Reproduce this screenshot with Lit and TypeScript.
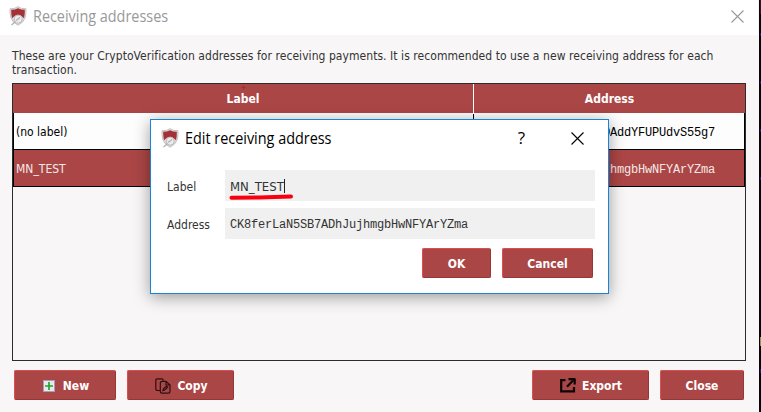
import { LitElement, html, css, svg } from "lit";
import { customElement } from "lit/decorators.js";

const shield = html`<svg class="shield" viewBox="0 0 18 20" width="18" height="20">
  <path d="M9 .7 Q12 3 17 2.8 Q17.2 8 16 12 Q14.5 16.5 9 19.2 Q3.5 16.5 2 12 Q.8 8 1 2.8 Q6 3 9 .7Z" fill="#dedede" stroke="#c2c2c2" stroke-width="1"/>
  <path d="M9 2.3 Q12 3.8 15.8 3.8 Q16 8 15 12.300 L13 10.500 Q9 7 5 10.500 L3 12.300 Q2 8 2.200 3.800 Q6 3.800 9 2.300Z" fill="#a53036"/>
  <circle cx="9.2" cy="13.2" r="4" fill="#ececec" stroke="#bbb"/>
  <path d="M2.5 19 L6.5 15.500 M7 14.500 L11 11.500" stroke="#b0b0b0" stroke-width="1.2" fill="none"/>
</svg>`;

const cross = svg`<path d="M.5 .5 L12.5 12.5 M12.5 .5 L.5 12.5" fill="none" stroke="currentColor" stroke-width="1.1"/>`;

@customElement("app-root")
export class AppRoot extends LitElement {
  static styles = css`
    :host {
      display: block;
      position: relative;
      width: 761px;
      height: 412px;
      overflow: hidden;
      background: #f8f6f7;
      font: 12px/14px "DejaVu Sans Condensed", "DejaVu Sans", sans-serif;
      font-stretch: condensed;
      color: #333;
    }
    * { box-sizing: border-box; }
    svg { display: block; flex: none; }
    .edge { position: absolute; right: 0; top: 0; }
    .titlebar {
      display: flex; align-items: center; height: 35px; padding: 0 17px 3px 9px;
      margin-right: 3px; background: #fff; color: #999;
    }
    .title { font: 16px/20px "Open Sans", "Noto Sans", sans-serif; white-space: nowrap; margin-left: 6px; flex: 1; }
    .title span { display: inline-block; transform: scaleX(.9); transform-origin: 0 50%; }
    .close { margin-right: -3px; }
    .intro { margin: 14px 0 0 12px; height: 34px; white-space: nowrap; letter-spacing: .057px; }
    .l1, .l2 { display: block; width: max-content; }
    .table {
      margin: 0 0 0 12px; width: 734px; height: 278px; border: 1px solid #2d2b2c;
    }
    .row { display: grid; grid-template-columns: 461px 271px; }
    .head { position: relative; height: 29px; background: #ab4646; color: #fff; font-weight: bold; text-align: center; line-height: 30px; }
    .head div:first-child { border-right: 1px solid #fff; }
    .speck { position: absolute; left: 228px; top: 1px; }
    .item { height: 37px; line-height: 38px; border: 1px solid #000; border-top: 0; background: #fdfdfd; color: #000; grid-template-columns: 460px 270px; }
    .item div { height: 36px; }
    .item div:first-child { border-right: 1px solid #000; padding-left: 2px; }
    .item div:last-child { text-align: right; padding-right: 29px; line-height: 40px; }
    .sel { background: #ab4646; color: #f6e8e8; }
    .mono { font-family: "Liberation Mono", monospace; font-size: 12px; letter-spacing: -.2px; }
    .bar { display: flex; margin: 9px 0 0 14px; width: 730px; }
    .gap { flex: 1; }
    .btn {
      display: flex; align-items: center; justify-content: center; height: 30px;
      background: #ab4646; border: 1px solid; border-color: #dc4f4f #963737 #963737 #dc4f4f; border-radius: 2px;
      color: #fff; font-weight: bold; gap: 8px; padding-top: 1px;
    }
    .new { width: 102px; padding-left: 2px; } .copy { width: 107px; margin-left: 11px; gap: 6px; padding-left: 2px; }
    .export { width: 117px; gap: 6px; padding-left: 1px; } .shut { width: 84px; margin-left: 11px; }
    .dialog {
      position: absolute; left: 150px; top: 119px; width: 459px; height: 175px;
      background: #fff; border: 1px solid #1883d7; box-shadow: 0 3px 15px rgba(0,0,0,.38);
    }
    .dialog .titlebar { height: 38px; margin: 0; padding: 0 24px 2px 10px; color: #000; }
    .help { font: 17px/20px "Open Sans", "Noto Sans", sans-serif; margin-right: 46px; }
    .dialog .close { margin-right: 0; }
    .field { display: grid; grid-template-columns: 58px 370px; margin: 12px 0 0 16px; height: 31px; line-height: 35px; }
    .field + .field { margin-top: 7px; }
    .input { height: 31px; background: #f0f0f0; padding-left: 5px; position: relative; }
    .input.txt { font-size: 13px; line-height: 33px; }
    .caret { display: inline-block; width: 1px; height: 14px; background: #222; vertical-align: -2px; }
    .mark { position: absolute; left: 4px; top: 23px; }
    .actions { display: flex; gap: 11px; margin: 9px 0 0 271px; }
    .ok { width: 69px; } .cancel { width: 91px; }
  `;

  render() {
    return html`
      <div class="titlebar">${shield}<div class="title"><span>Receiving addresses</span></div>
        <svg class="close" width="13" height="13">${cross}</svg></div>
      <div class="intro">
        <span class="l1">These are your CryptoVerification addresses for receiving payments. It is recommended to use a new receiving address for each</span>
        <span class="l2">transaction.</span>
      </div>
      <div class="table">
        <div class="row head"><div>Label</div><div>Address</div>
          <svg class="speck" width="5" height="5"><path d="M2.500.500v4M.500 2.500h4" stroke="#963335"/></svg></div>
        <div class="row item"><div>(no label)</div><div class="mono">DAddYFUPUdvS55g7</div></div>
        <div class="row item sel"><div>MN_TEST</div><div class="mono">CK8ferLaN5SB7ADhJujhmgbHwNFYArYZma</div></div>
      </div>
      <div class="bar">
        <div class="btn new"><svg width="12" height="12"><rect x=".5" y=".5" width="11" height="11" fill="#e9e9ea" stroke="#a79cc0"/><path d="M6 2v8M2 6h8" stroke="#24a32d" stroke-width="1.7"/></svg><span>New</span></div>
        <div class="btn copy"><svg width="16" height="16" fill="none" stroke="#281011" stroke-width="1.2"><path d="M5 12.500H2.500Q.8 12.500.8 10.500V2.500Q.8.800 2.500.800H6.500Q8 .8 8.500 2.500"/><path d="M7.500 3.300H11L15 7V13.500Q15 15.200 13.300 15.200H7Q5.300 15.200 5.300 13.500V5Q5.300 3.300 7.500 3.300ZM11 3.500V7H15"/><path d="M8 12.500L8.500 10.800L11.500 8L12.700 9.200L9.700 12Z"/></svg><span>Copy</span></div>
        <div class="gap"></div>
        <div class="btn export"><svg width="16" height="15" fill="none" stroke="#0b0505" stroke-width="2.200"><path d="M5.500 2.200H1.200V13.300H14V9"/><path d="M7 8.700L13.500 2"/><path d="M8.500 1.200H15M14.700.500V6.500"/></svg><span>Export</span></div>
        <div class="btn shut"><span>Close</span></div>
      </div>
      <svg class="edge" width="2" height="412"><path d="M1 0V412" stroke="#07040c" stroke-width="2"/>
        <path d="M1.500 33v3M1.500 81v3M1.500 129v3M1.500 177v3M1.500 369v4" stroke="#26108a"/><path d="M1.500 0v14" stroke="#3a1420"/><path d="M1.500 337v9" stroke="#97924f"/></svg>
      <div class="dialog">
        <div class="titlebar">${shield}<div class="title"><span>Edit receiving address</span></div>
          <span class="help">?</span><svg class="close" width="13" height="13">${cross}</svg></div>
        <div class="field"><span>Label</span><div class="input txt">MN_TEST<i class="caret"></i>
          <svg class="mark" width="66" height="8"><path d="M2.500 4.700L30 4.600L62 3.500" fill="none" stroke="#f8000f" stroke-width="4" stroke-linecap="round"/></svg></div></div>
        <div class="field"><span>Address</span><div class="input mono">CK8ferLaN5SB7ADhJujhmgbHwNFYArYZma</div></div>
        <div class="actions"><div class="btn ok"><span>OK</span></div><div class="btn cancel"><span>Cancel</span></div></div>
      </div>`;
  }
}
